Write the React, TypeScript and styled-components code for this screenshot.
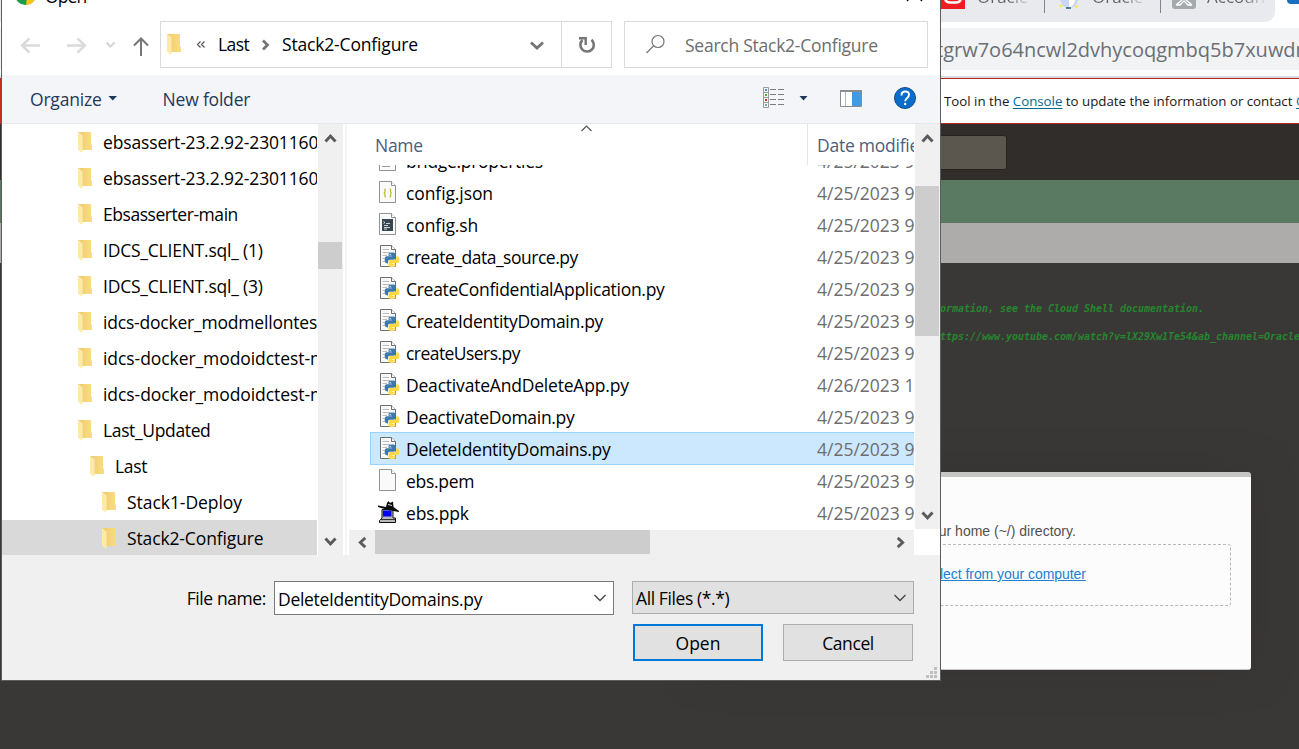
import React from "react";
import styled, { createGlobalStyle } from "styled-components";

const Global = createGlobalStyle`
  * { box-sizing: border-box; }
  html, body { margin: 0; padding: 0; }
  body { width: 1299px; height: 749px; overflow: hidden; background: #3a3836; font-family: "Open Sans", sans-serif; }
  svg { flex: none; }
`;

const Screen = styled.div`
  position: relative;
  width: 1299px;
  height: 749px;
  overflow: hidden;
  display: flex;
  flex-direction: column;
  background: #3a3836;
`;

/* ---------- browser page behind the dialog ---------- */

const TabStrip = styled.div`
  height: 22px;
  flex: none;
  background: #fff;
  display: flex;
`;
const InactiveTabs = styled.div`
  width: 1275px;
  flex: none;
  height: 22px;
  background: #e8eaed;
  border-bottom-right-radius: 10px;
  padding-left: 940px;
  display: flex;
  align-items: flex-start;
`;
const Tab = styled.div<{ $w: number; $pad: number; $gap: number }>`
  width: ${(p) => p.$w}px;
  flex: none;
  height: 22px;
  padding-left: ${(p) => p.$pad}px;
  display: flex;
  gap: ${(p) => p.$gap}px;
  overflow: hidden;
`;
const TabDivider = styled.div`
  width: 1px;
  flex: none;
  height: 13px;
  background: #80868b;
  margin-right: -1px;
`;
const TabTitle = styled.span<{ $fade: number }>`
  font-size: 17px;
  line-height: 20px;
  height: 20px;
  margin-top: -13px;
  color: #5f6368;
  background: linear-gradient(90deg, #5f6368 ${(p) => p.$fade}%, #e8eaed 105%);
  background-clip: text;
  -webkit-text-fill-color: transparent;
`;
const ActiveTabIcon = styled.div`
  width: 24px;
  flex: none;
  height: 4px;
  margin-left: 12px;
  background: #1b6ec2;
  border-bottom-left-radius: 6px;
`;
const AddressRow = styled.div`
  height: 56px;
  flex: none;
  padding-top: 6px;
  background: #fff;
  border-bottom: 2px solid #dadce0;
`;
const Omnibox = styled.div`
  height: 42px;
  background: #f1f3f4;
  padding-left: 936px;
  overflow: hidden;
  white-space: nowrap;
  font-size: 20px;
  line-height: 44px;
  color: #6b6f74;
`;
const Banner = styled.div`
  height: 46px;
  flex: none;
  display: flex;
  background: #fff;
  border: solid #ae2c20;
  border-width: 1px 0;
  line-height: 44px;
  font-size: 13.3px;
  color: #1a1816;
  white-space: nowrap;
`;
const BannerMark = styled.div`
  width: 46px;
  flex: none;
  background: #c0301c;
`;
const BannerText = styled.div`
  padding-left: 898px;
  letter-spacing: -0.01px;
`;
const BannerLink = styled.a`
  color: #006b8f;
  text-decoration: underline;
  text-underline-offset: 2px;
`;
const ConsoleHeader = styled.div`
  height: 56px;
  flex: none;
  background: #312d2a;
  padding: 11px 0 0 700px;
`;
const ConsoleSearch = styled.div`
  width: 307px;
  height: 35px;
  background: #5b564e;
  border: 1px solid #28231f;
  border-radius: 3px;
`;
const GreenBar = styled.div`
  height: 43px;
  flex: none;
  background: #5b7a62;
`;
const GreyBar = styled.div`
  height: 40px;
  flex: none;
  background: #adacaa;
`;
const Terminal = styled.div`
  flex: 1;
  background: #3a3836;
  padding-top: 32px;
`;
const TermLine = styled.div`
  height: 28px;
  padding-left: 940px;
  white-space: nowrap;
  overflow: hidden;
  font: italic bold 10px/28px "DejaVu Sans Mono", monospace;
  letter-spacing: -0.02px;
  color: #25862f;
`;
const UploadCard = styled.div`
  width: 551px;
  height: 198px;
  margin: 121px 0 0 700px;
  padding-top: 46px;
  background: #fcfcfc;
  border-top: 5px solid #c6c6c5;
  border-bottom: 1px solid #c6c6c5;
  border-radius: 3px;
  box-shadow: 0 0 36px rgba(48, 46, 45, 0.5);
  font: 14px/20px "Liberation Sans", sans-serif;
  color: #53504d;
  white-space: nowrap;
`;
const UploadHint = styled.div`
  padding-left: 231px;
  height: 21px;
  line-height: 17px;
`;
const DropZone = styled.div`
  width: 531px;
  height: 62px;
  padding-left: 239px;
  border: 1px dashed #b5b8bd;
  border-radius: 3px;
  line-height: 58px;
`;
const DropLink = styled.a`
  color: #227fd0;
  letter-spacing: -0.05px;
  text-decoration: underline;
`;

/* ---------- file dialog ---------- */

const Dialog = styled.div`
  position: absolute;
  left: 1px;
  top: -30px;
  width: 940px;
  height: 711px;
  border: 1px solid #5c5c5c;
  background: #fff;
  display: flex;
  flex-direction: column;
  font-size: 17.5px;
  color: #000;
  white-space: nowrap;
`;
const TitleBar = styled.div`
  height: 50px;
  flex: none;
  display: flex;
  justify-content: space-between;
  padding: 13px 13px 0 13px;
`;
const TitleLeft = styled.div`
  display: flex;
  gap: 9px;
  line-height: 24px;
  letter-spacing: -0.9px;
`;
const NavRow = styled.div`
  height: 54px;
  flex: none;
  display: flex;
  padding: 0 11px 7px 0;
`;
const NavButtons = styled.div`
  width: 158px;
  flex: none;
  height: 47px;
`;
const AddressBox = styled.div`
  width: 452px;
  flex: none;
  height: 47px;
  border: 1px solid #d9d9d9;
  display: flex;
  align-items: center;
`;
const Crumb = styled.span<{ $ls: number; $ml: number; $w: number }>`
  margin-left: ${(p) => p.$ml}px;
  width: ${(p) => p.$w}px;
  flex: none;
  letter-spacing: ${(p) => p.$ls}px;
  height: 46px;
  line-height: 45px;
`;
const AddressDrop = styled.div`
  margin-left: auto;
  width: 49px;
  flex: none;
  height: 45px;
  border-right: 1px solid #d9d9d9;
`;
const RefreshCell = styled.div`
  width: 49px;
  flex: none;
  height: 45px;
  overflow: hidden;
`;
const SearchBox = styled.div`
  margin-left: 12px;
  width: 304px;
  flex: none;
  height: 47px;
  border: 1px solid #d9d9d9;
  display: flex;
  line-height: 46px;
  color: #6d6d6d;
  letter-spacing: -0.25px;
`;
const Toolbar = styled.div`
  height: 49px;
  flex: none;
  display: flex;
  align-items: center;
  background: #f4f5f8;
  border-bottom: 1px solid #e6e7e9;
  color: #1e395b;
`;
const ToolLabel = styled.span<{ $ml: number; $ls: number }>`
  margin-left: ${(p) => p.$ml}px;
  letter-spacing: ${(p) => p.$ls}px;
`;
const ToolIcons = styled.div`
  margin-left: auto;
  width: 190px;
  height: 48px;
`;
const Body = styled.div`
  height: 431px;
  flex: none;
  display: flex;
`;
const Tree = styled.div`
  width: 315px;
  flex: none;
  overflow: hidden;
`;
const TreeRow = styled.div<{ $level: number; $selected?: boolean }>`
  height: 36px;
  display: flex;
  padding-left: ${(p) => 76 + p.$level * 12}px;
  background: ${(p) => (p.$selected ? "#d9d9d9" : "transparent")};
  > svg {
    margin-top: 8px;
  }
`;
const TreeLabel = styled.span<{ $ls: number }>`
  margin-left: 11px;
  flex: none;
  line-height: 37px;
  height: 36px;
  letter-spacing: ${(p) => p.$ls}px;
`;
const VScroll = styled.div<{ $ml: number; $h: number; $w: number }>`
  flex: none;
  margin-left: ${(p) => p.$ml}px;
  width: ${(p) => p.$w}px;
  height: ${(p) => p.$h}px;
  padding-top: 1px;
  background: #f0f0f0;
  display: flex;
  flex-direction: column;
  justify-content: space-between;
`;
const VThumb = styled.div<{ $mt: number; $h: number }>`
  width: 24px;
  height: ${(p) => p.$h}px;
  margin: ${(p) => p.$mt}px 0 auto;
  background: #cdcdcd;
`;
const Splitter = styled.div`
  width: 2px;
  flex: none;
  margin: 0 2px 0 2px;
  background: #f5f5f5;
`;
const Files = styled.div`
  width: 565px;
  flex: none;
  display: flex;
  flex-direction: column;
`;
const ColumnHeads = styled.div`
  position: relative;
  height: 41px;
  flex: none;
  display: flex;
  color: #4c607a;
  line-height: 42px;
  overflow: hidden;
`;
const NameHead = styled.div`
  width: 459px;
  flex: none;
  padding-left: 26px;
  letter-spacing: -0.3px;
  border-right: 1px solid #e5e5e5;
`;
const SortMark = styled.svg`
  position: absolute;
  left: 231px;
  top: 0;
`;
const DateHead = styled.div`
  padding-left: 9px;
  letter-spacing: -0.25px;
`;
const FileList = styled.div`
  height: 365px;
  overflow: hidden;
  padding-left: 21px;
`;
const FileRows = styled.div`
  margin-top: -21px;
`;
const FileRow = styled.div<{ $selected?: boolean }>`
  height: 33px;
  margin-bottom: -1px;
  border: 1px solid ${(p) => (p.$selected ? "#99d1ff" : "transparent")};
  border-right: 0;
  background: ${(p) => (p.$selected ? "#cce8ff" : "transparent")};
  display: flex;
  overflow: hidden;
`;
const FileIcon = styled.div`
  width: 35px;
  flex: none;
  height: 31px;
`;
const FileName = styled.span<{ $ls: number }>`
  width: 411px;
  flex: none;
  line-height: 33px;
  letter-spacing: ${(p) => p.$ls}px;
`;
const FileDate = styled.span`
  flex: none;
  line-height: 33px;
  color: #6d6d6d;
`;
const HScroll = styled.div`
  height: 25px;
  padding: 0 1px;
  background: #f0f0f0;
  display: flex;
  align-items: stretch;
`;
const HThumb = styled.div`
  width: 275px;
  flex: none;
  height: 24px;
  background: #cdcdcd;
  margin-right: auto;
`;
const Footer = styled.div`
  position: relative;
  flex: 1;
  background: #f0f0f0;
  padding: 26px 26px 0 0;
`;
const FieldRow = styled.div`
  display: flex;
  align-items: flex-start;
  height: 36px;
  line-height: 35px;
`;
const FieldLabel = styled.div`
  width: 272px;
  flex: none;
  padding-right: 8px;
  text-align: right;
  letter-spacing: -0.4px;
`;
const NameInput = styled.div`
  width: 340px;
  flex: none;
  height: 34px;
  border: 1px solid #7a7a7a;
  background: #fff;
  padding: 0 6px 0 3px;
  letter-spacing: -0.3px;
  display: flex;
  justify-content: space-between;
`;
const TypeSelect = styled.div`
  margin-left: 18px;
  width: 282px;
  flex: none;
  height: 33px;
  border: 1px solid #adadad;
  background: #e1e1e1;
  padding: 0 6px 0 3px;
  line-height: 33px;
  letter-spacing: -0.4px;
  display: flex;
  justify-content: space-between;
`;
const ButtonRow = styled.div`
  display: flex;
  justify-content: flex-end;
  gap: 20px;
  padding: 7px 1px 0 0;
`;
const PushButton = styled.div<{ $primary?: boolean }>`
  width: 130px;
  height: 37px;
  border: ${(p) => (p.$primary ? "2px solid #0078d7" : "1px solid #adadad")};
  background: #e1e1e1;
  text-align: center;
  letter-spacing: ${(p) => (p.$primary ? 0 : -0.4)}px;
  line-height: ${(p) => (p.$primary ? 34 : 36)}px;
`;
const Grip = styled.svg`
  position: absolute;
  right: 3px;
  bottom: 2px;
`;

const Folder = () => (
  <svg width="14" height="21" viewBox="0 0 14 21">
    <defs>
      <linearGradient id="fold" x1="0" x2="1">
        <stop offset="0" stopColor="#eccb70" />
        <stop offset="1" stopColor="#fbdd81" />
      </linearGradient>
    </defs>
    <path d="M0 0H13V12.5H14V18H1Z" fill="url(#fold)" />
    <path d="M0 0L4.6 3.6V18L4 21L0 17.5Z" fill="#fee9a6" />
  </svg>
);

const ThickChevron = ({ dir }: { dir: "up" | "down" | "left" | "right" }) => {
  const angle = { up: 0, right: 90, down: 180, left: 270 }[dir];
  return (
    <svg width="25" height={dir === "left" || dir === "right" ? 25 : 27} viewBox="-12.5 -13.5 25 27">
      <path d="M-5 3L0 -2.4L5 3" transform={`rotate(${angle})`} fill="none" stroke="#5b5b5b" strokeWidth="3" />
    </svg>
  );
};

const ThinChevron = () => (
  <svg width="14" height="32" viewBox="0 0 14 32">
    <path d="M1.5 13L7 18.5L12.5 13" fill="none" stroke="#444" strokeWidth="1.3" />
  </svg>
);

const SNAKE =
  "M12 0C5.8 0 6.2 2.7 6.2 2.7V5.5H12.1V6.3H3.9S0 5.9 0 12C0 18.1 3.4 17.9 3.4 17.9H5.4V15.1S5.3 11.7 8.7 11.7H14.6S17.8 11.8 17.8 8.6V3.2S18.3 0 12 0Z";

const Page = () => (
  <>
    <path d="M.5 .5H12.5L16.5 4.5V21.5H.5Z" fill="#fafafa" stroke="#929292" />
    <path d="M12.5 .5V4.5H16.5" fill="#fff" stroke="#929292" />
  </>
);

type Kind = "text" | "json" | "sh" | "py" | "blank" | "ppk";

const KindIcon = ({ kind }: { kind: Kind }) => (
  <svg width="35" height="31" viewBox="0 0 35 31">
    {kind === "ppk" ? (
      <g transform="translate(7,4)">
        <path d="M4 8.500H15V17H17.500V21.500H1.500V19.500L4 17Z" fill="#b9b9b9" stroke="#111" />
        <path d="M5 9.500H13.500V15.500H5Z" fill="#0000f5" />
        <path d="M2 18.500H17" stroke="#333" />
        <path d="M0 4.500L8 6L9 2L10.500 0L12 2L15 .500L15.500 6L21 10V11L10 9L0 6Z" fill="#0a0a0a" />
        <path d="M10 3.500L14 4.500" stroke="#ddd" />
      </g>
    ) : kind === "py" ? (
      <g transform="translate(9,4)">
        <path d="M.5 .5H11.5L15.5 4.500V21.5H.5Z" fill="#fafafa" stroke="#6d6d6d" />
        <path d="M11.5 .5V4.500H15.5" fill="#fff" stroke="#6d6d6d" />
        <path d="M2.5 4.5H9M2.5 7.5H10M2.5 10.5H7M2.5 13.5H5M2.5 16.5H5" stroke="#bdbdbd" />
        <g transform="translate(4.7,7.500) scale(.61)">
          <path d={SNAKE} fill="#3c78ab" />
          <path d={SNAKE} fill="#ffd94b" transform="rotate(180 12 12)" />
          <circle cx="9" cy="3" r="1.1" fill="#fff" />
          <circle cx="15" cy="21" r="1.1" fill="#fff" />
        </g>
      </g>
    ) : (
      <g transform="translate(8,4)">
        <Page />
        {kind === "text" && <path d="M4 9.5H12M4 12.5H13M3 17.5H11" stroke="#9a9a9a" />}
        {kind === "json" && (
          <path d="M7 8C5.3 8 6 9 6 10.5Q6 12 4.6 12Q6 12 6 13.5C6 15 5.3 16 7 16M10.5 8C12.200 8 11.500 9 11.500 10.500Q11.500 12 13 12Q11.500 12 11.500 13.500C11.500 15 12.200 16 10.500 16" fill="none" stroke="#b9b92e" strokeWidth="1.2" />
        )}
        {kind === "sh" && (
          <g>
            <path d="M3 6H14V18H3Z" fill="#37474f" />
            <path d="M4.500 8.500L6 9.500L4.500 10.500M7 10.500H11M5 12.500H9M5 14.500H11M5 16H8" stroke="#dfe4e6" strokeWidth=".9" fill="none" />
          </g>
        )}
      </g>
    )}
  </svg>
);

const tree: { name: string; level: number; ls: number }[] = [
  { name: "ebsassert-23.2.92-2301160", level: 0, ls: -0.15 },
  { name: "ebsassert-23.2.92-2301160", level: 0, ls: -0.15 },
  { name: "Ebsasserter-main", level: 0, ls: -0.45 },
  { name: "IDCS_CLIENT.sql_ (1)", level: 0, ls: -0.22 },
  { name: "IDCS_CLIENT.sql_ (3)", level: 0, ls: -0.22 },
  { name: "idcs-docker_modmellontest", level: 0, ls: -0.2 },
  { name: "idcs-docker_modoidctest-m", level: 0, ls: -0.07 },
  { name: "idcs-docker_modoidctest-m", level: 0, ls: -0.07 },
  { name: "Last_Updated", level: 0, ls: -0.36 },
  { name: "Last", level: 1, ls: -0.3 },
  { name: "Stack1-Deploy", level: 2, ls: -0.05 },
  { name: "Stack2-Configure", level: 2, ls: -0.13 },
];

const files: { name: string; kind: Kind; date: string; ls: number }[] = [
  { name: "bridge.properties", kind: "text", date: "4/25/2023 9:", ls: -0.3 },
  { name: "config.json", kind: "json", date: "4/25/2023 9:", ls: -0.1 },
  { name: "config.sh", kind: "sh", date: "4/25/2023 9:", ls: -0.1 },
  { name: "create_data_source.py", kind: "py", date: "4/25/2023 9:", ls: -0.48 },
  { name: "CreateConfidentialApplication.py", kind: "py", date: "4/25/2023 9:", ls: -0.29 },
  { name: "CreateIdentityDomain.py", kind: "py", date: "4/25/2023 9:", ls: -0.3 },
  { name: "createUsers.py", kind: "py", date: "4/25/2023 9:", ls: -0.55 },
  { name: "DeactivateAndDeleteApp.py", kind: "py", date: "4/26/2023 1", ls: -0.2 },
  { name: "DeactivateDomain.py", kind: "py", date: "4/25/2023 9:", ls: -0.3 },
  { name: "DeleteIdentityDomains.py", kind: "py", date: "4/25/2023 9:", ls: -0.29 },
  { name: "ebs.pem", kind: "blank", date: "4/25/2023 9:", ls: -0.3 },
  { name: "ebs.ppk", kind: "ppk", date: "4/25/2023 9:", ls: -0.2 },
];

const BrowserPage = () => (
  <>
    <TabStrip>
      <InactiveTabs>
        <Tab $w={104} $pad={1} $gap={12}>
          <svg width="24" height="9" viewBox="0 0 24 9">
            <path d="M0 0H24V9H0Z" fill="#ee1c24" />
            <path d="M4 -3Q4 2.500 9 2.500H15Q20 2.500 20 -3" fill="none" stroke="#fff" strokeWidth="2.500" />
          </svg>
          <TabTitle $fade={60}>Oracle</TabTitle>
        </Tab>
        <TabDivider />
        <Tab $w={116} $pad={14} $gap={12}>
          <svg width="22" height="9" viewBox="0 0 22 9">
            <path d="M2 0Q4 8 11 8Q18 8 20 0Z" fill="#c9d6f4" />
            <path d="M11 0V8Q16 6 17 0Z" fill="#fff" />
            <path d="M1.500 5.500L4 6.500M17 7L20 6" stroke="#f5f02a" strokeWidth="2.200" />
            <path d="M8 8H13" stroke="#226a80" strokeWidth="1.600" />
          </svg>
          <TabTitle $fade={60}>Oracle</TabTitle>
        </Tab>
        <TabDivider />
        <Tab $w={112} $pad={12} $gap={11}>
          <svg width="24" height="9" viewBox="0 0 24 9">
            <path d="M0 0H24V6Q24 9 21 9H3Q0 9 0 6Z" fill="#a5a9ac" />
            <path d="M4 5L10 0M20 5L14 0M4 5H8L12 1L16 5H20" stroke="#fff" strokeWidth="1.300" fill="none" />
          </svg>
          <TabTitle $fade={60}>Accoun</TabTitle>
        </Tab>
      </InactiveTabs>
      <ActiveTabIcon />
    </TabStrip>
    <AddressRow>
      <Omnibox>tgrw7o64ncwl2dvhycoqgmbq5b7xuwdn</Omnibox>
    </AddressRow>
    <Banner>
      <BannerMark />
      <BannerText>
        Tool in the <BannerLink>Console</BannerLink> to update the information or contact <BannerLink>Oracle</BannerLink>
      </BannerText>
    </Banner>
    <ConsoleHeader>
      <ConsoleSearch />
    </ConsoleHeader>
    <GreenBar />
    <GreyBar />
    <Terminal>
      <TermLine>ormation, see the Cloud Shell documentation.</TermLine>
      <TermLine>ttps://www.youtube.com/watch?v=lX29Xw1Te54&amp;ab_channel=Oracle</TermLine>
      <UploadCard>
        <UploadHint>our home (~/) directory.</UploadHint>
        <DropZone>
          <DropLink>lect from your computer</DropLink>
        </DropZone>
      </UploadCard>
    </Terminal>
  </>
);

export default function App() {
  return (
    <Screen>
      <Global />
      <BrowserPage />
      <Dialog>
        <TitleBar>
          <TitleLeft>
            <svg width="21" height="21" viewBox="0 0 21 21">
              <circle cx="10.500" cy="10.500" r="10.500" fill="#1e9a48" />
              <path d="M11 21A10.500 10.500 0 0 0 20 6H13Z" fill="#fcc314" />
            </svg>
            <span>Open</span>
          </TitleLeft>
          <svg width="24" height="24" viewBox="0 0 24 24">
            <path d="M4 2L19 17M19 2L4 17" stroke="#000" strokeWidth="1.300" />
          </svg>
        </TitleBar>
        <NavRow>
          <NavButtons>
            <svg width="158" height="47" viewBox="2 21 158 47" fill="none">
              <path d="M40 45.500H22M29.500 38.500L22 45.500L29.500 52.500" stroke="#dadada" strokeWidth="2.400" />
              <path d="M67 45.500H85M77.500 38.500L85 45.500L77.500 52.500" stroke="#dadada" strokeWidth="2.400" />
              <path d="M106.500 42.500L110.500 46.500L114.500 42.500" stroke="#d4d4d4" strokeWidth="2" />
              <path d="M141 56V38.500M134 45.500L141 38.500L148 45.500" stroke="#767676" strokeWidth="2" />
            </svg>
          </NavButtons>
          <AddressBox>
            <svg width="28" height="45" viewBox="161 22 28 45">
              <svg x="167" y="34" width="14" height="21">
                <Folder />
              </svg>
            </svg>
            <svg width="20" height="45" viewBox="189 22 20 45" fill="none">
              <path d="M200.500 41.500L197.500 44.500L200.500 47.500M204.500 41.500L201.500 44.500L204.500 47.500" stroke="#555" strokeWidth="1.200" />
            </svg>
            <Crumb $ls={-0.6} $ml={9} $w={37}>Last</Crumb>
            <svg width="20" height="45" viewBox="255 22 20 45" fill="none">
              <path d="M263 40.500L267.500 45L263 49.500" stroke="#757575" strokeWidth="2.800" />
            </svg>
            <Crumb $ls={-0.17} $ml={7} $w={150}>Stack2-Configure</Crumb>
            <AddressDrop>
              <svg width="48" height="45" viewBox="513 22 48 45" fill="none">
                <path d="M531 42.500L537 48L543 42.500" stroke="#757575" strokeWidth="2.800" />
              </svg>
            </AddressDrop>
            <RefreshCell>
              <svg width="49" height="45" viewBox="562 22 49 45" fill="none">
                <path d="M582.500 40A6.700 6.700 0 1 0 591.500 39.800" stroke="#757575" strokeWidth="2.600" />
                <path d="M579 38.300H585.700V45" stroke="#757575" strokeWidth="2.400" />
              </svg>
            </RefreshCell>
          </AddressBox>
          <SearchBox>
            <svg width="60" height="45" viewBox="625 22 60 45" fill="none">
              <circle cx="658" cy="41.500" r="6" stroke="#767676" strokeWidth="1.200" />
              <path d="M653.500 46L646.500 53" stroke="#767676" strokeWidth="1.300" />
            </svg>
            Search Stack2-Configure
          </SearchBox>
        </NavRow>
        <Toolbar>
          <ToolLabel $ml={28} $ls={-0.2}>Organize</ToolLabel>
          <svg width="16" height="8" viewBox="0 0 16 8">
            <path d="M6.500 1H15L10.700 5.500Z" fill="#1e395b" />
          </svg>
          <ToolLabel $ml={45} $ls={-0.2}>New folder</ToolLabel>
          <ToolIcons>
            <svg width="190" height="48" viewBox="750 75 190 48" fill="none">
              <path d="M763.500 87.500H768.500V107.500H763.500ZM763.500 92.500H768.500M763.500 97.500H768.500M763.500 102.500H768.500" stroke="#9b9b9b" />
              <path d="M765 90H767" stroke="#4a90c2" strokeWidth="2" />
              <path d="M765 95H767" stroke="#6a9a3a" strokeWidth="2" />
              <path d="M765 100H767" stroke="#b83a1a" strokeWidth="2" />
              <path d="M765 105H767" stroke="#79a9a0" strokeWidth="2" />
              <path d="M770 89.500H776M778 89.500H784M770 94.500H776M778 94.500H784M770 99.500H776M778 99.500H784M770 104.500H776M778 104.500H784" stroke="#7d7d7d" />
              <path d="M799.500 96H807.500L803.500 100.500Z" fill="#1e395b" />
              <path d="M840.500 90.500H861.500V106.500H840.500Z" fill="#fff" stroke="#8c8c8c" />
              <path d="M840 91H862" stroke="#8c8c8c" strokeWidth="2" />
              <path d="M845.500 92V106" stroke="#b5b5b5" />
              <path d="M852 92H861V106H852Z" fill="#419ae2" />
              <circle cx="905" cy="98" r="10.500" fill="#0a6ccb" stroke="#144a86" />
              <path d="M901.500 95.500Q901.500 91.500 905.200 91.500Q909 91.500 909 94.800Q909 96.700 907 98.200Q905.200 99.500 905.200 101.300" stroke="#fff" strokeWidth="1.900" />
              <circle cx="905.200" cy="104" r="1.200" fill="#fff" />
            </svg>
          </ToolIcons>
        </Toolbar>
        <Body>
          <Tree>
            {tree.map((t, i) => (
              <TreeRow key={i} $level={t.level} $selected={i === tree.length - 1}>
                <Folder />
                <TreeLabel $ls={t.ls}>{t.name}</TreeLabel>
              </TreeRow>
            ))}
          </Tree>
          <VScroll $ml={1} $h={431} $w={25}>
            <ThickChevron dir="up" />
            <VThumb $mt={90} $h={27} />
            <ThickChevron dir="down" />
          </VScroll>
          <Splitter />
          <Files>
            <ColumnHeads>
              <NameHead>Name</NameHead>
              <SortMark width="14" height="9" viewBox="0 0 14 9">
                <path d="M1.500 7L6.500 2L11.500 7" fill="none" stroke="#555" strokeWidth="1.200" />
              </SortMark>
              <DateHead>Date modified</DateHead>
            </ColumnHeads>
            <FileList>
              <FileRows>
                {files.map((f) => (
                  <FileRow key={f.name} $selected={f.name === "DeleteIdentityDomains.py"}>
                    <FileIcon>
                      <KindIcon kind={f.kind} />
                    </FileIcon>
                    <FileName $ls={f.ls}>{f.name}</FileName>
                    <FileDate>{f.date}</FileDate>
                  </FileRow>
                ))}
              </FileRows>
            </FileList>
            <HScroll>
              <ThickChevron dir="left" />
              <HThumb />
              <ThickChevron dir="right" />
            </HScroll>
          </Files>
          <VScroll $ml={1} $h={405} $w={25}>
            <ThickChevron dir="up" />
            <VThumb $mt={34} $h={150} />
            <ThickChevron dir="down" />
          </VScroll>
        </Body>
        <Footer>
          <FieldRow>
            <FieldLabel>File name:</FieldLabel>
            <NameInput>
              DeleteIdentityDomains.py
              <ThinChevron />
            </NameInput>
            <TypeSelect>
              All Files (*.*)
              <ThinChevron />
            </TypeSelect>
          </FieldRow>
          <ButtonRow>
            <PushButton $primary>Open</PushButton>
            <PushButton>Cancel</PushButton>
          </ButtonRow>
          <Grip width="11" height="11" viewBox="0 0 11 11">
            <path d="M8 0H11V3H8ZM4 4H7V7H4ZM8 4H11V7H8ZM0 8H3V11H0ZM4 8H7V11H4ZM8 8H11V11H8Z" fill="#bfbfbf" />
          </Grip>
        </Footer>
      </Dialog>
    </Screen>
  );
}
